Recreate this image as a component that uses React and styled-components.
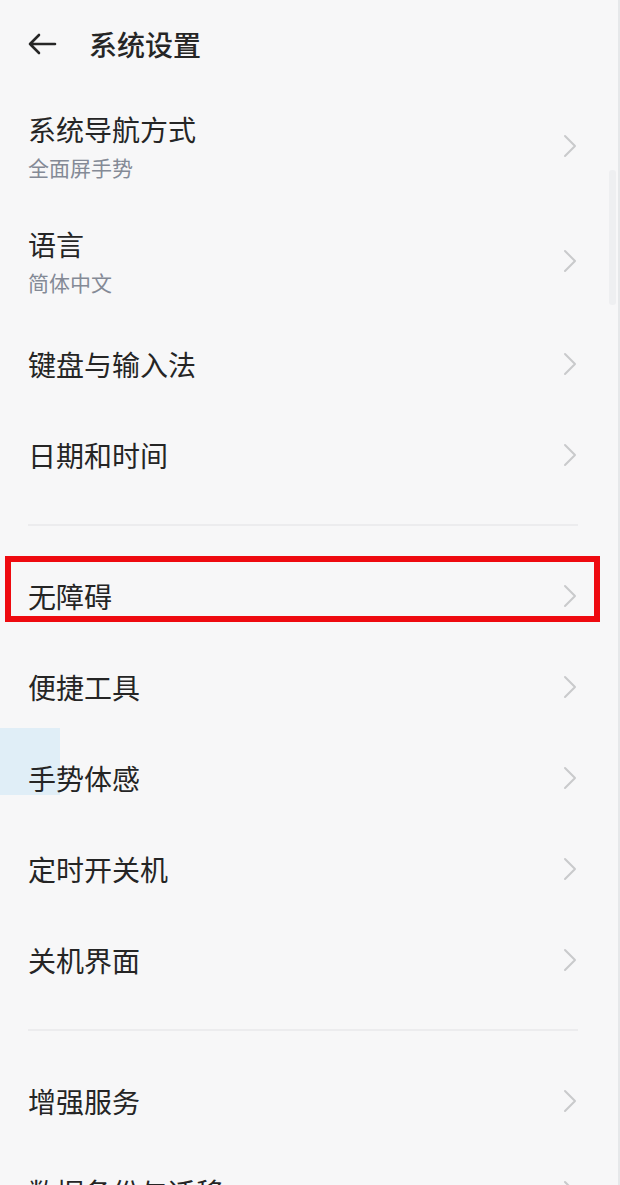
import React from "react";
import styled, { createGlobalStyle } from "styled-components";

const Global = createGlobalStyle`
  html, body { margin: 0; padding: 0; background: #f7f7f8; }
  body { font-family: "Noto Sans CJK SC", "Noto Sans", sans-serif; }
  *, *::before, *::after { box-sizing: border-box; }
`;

const Page = styled.div`
  position: relative;
  width: 620px;
  height: 1185px;
  overflow: hidden;
  background: #f7f7f8;
  border-right: 2px solid #e6e8ea;
`;

const Header = styled.header`
  height: 88px;
  display: flex;
  align-items: center;
  padding-left: 27px;
  gap: 32px;
`;

const Title = styled.h1`
  margin: 0;
  font-size: 28px;
  font-weight: 500;
  color: #262626;
  line-height: 1;
`;

const List = styled.div`
  position: relative;
  z-index: 1;
  display: flex;
  flex-direction: column;
`;

const Row = styled.div`
  position: relative;
  height: ${(p) => (p.$sub ? 115 : 91)}px;
  display: flex;
  align-items: center;
  justify-content: space-between;
  padding: 0 40px 0 28px;
  ${(p) =>
    p.$highlight &&
    `
    &::after {
      content: "";
      position: absolute;
      left: 5px;
      top: 6px;
      width: 595px;
      height: 66px;
      border: 6px solid #ee0a10;
    }
  `}
`;

const TextCol = styled.div`
  display: flex;
  flex-direction: column;
  gap: 10px;
`;

const Label = styled.div`
  font-size: 28px;
  color: #252525;
  line-height: 32px;
`;

const Sub = styled.div`
  font-size: 21px;
  color: #848a96;
  line-height: 24px;
`;

const Divider = styled.div`
  height: 50px;
  display: flex;
  align-items: center;
  padding: 0 40px 0 28px;
  &::before {
    content: "";
    flex: 1;
    height: 2px;
    background: #ececee;
  }
`;

const EdgeTab = styled.div`
  position: absolute;
  z-index: 0;
  left: 0;
  top: 728px;
  width: 60px;
  height: 67px;
  background: #e0eef7;
`;

const ScrollThumb = styled.div`
  position: absolute;
  right: 2px;
  top: 170px;
  width: 7px;
  height: 135px;
  background: #eeeff1;
  border-radius: 3px;
`;

const Chevron = () => (
  <svg width="16" height="24" viewBox="0 0 16 24" fill="none">
    <path d="M3 2 L13 12 L3 22" stroke="#c9cacc" strokeWidth="2" strokeLinecap="round" strokeLinejoin="round" />
  </svg>
);

const BackArrow = () => (
  <svg width="30" height="24" viewBox="0 0 30 24" fill="none">
    <path d="M28 12 H3 M12 3 L3 12 L12 21" stroke="#262626" strokeWidth="2.6" strokeLinecap="round" strokeLinejoin="round" />
  </svg>
);

const Item = ({ label, sub, highlight }) => (
  <Row $sub={!!sub} $highlight={highlight}>
    <TextCol>
      <Label>{label}</Label>
      {sub && <Sub>{sub}</Sub>}
    </TextCol>
    <Chevron />
  </Row>
);

export default function App() {
  return (
    <Page>
      <Global />
      <EdgeTab />
      <ScrollThumb />
      <Header>
        <BackArrow />
        <Title>系统设置</Title>
      </Header>
      <List>
        <Item label="系统导航方式" sub="全面屏手势" />
        <Item label="语言" sub="简体中文" />
        <Item label="键盘与输入法" />
        <Item label="日期和时间" />
        <Divider />
        <Item label="无障碍" highlight />
        <Item label="便捷工具" />
        <Item label="手势体感" />
        <Item label="定时开关机" />
        <Item label="关机界面" />
        <Divider />
        <Item label="增强服务" />
        <Item label="数据备份与迁移" />
      </List>
    </Page>
  );
}
